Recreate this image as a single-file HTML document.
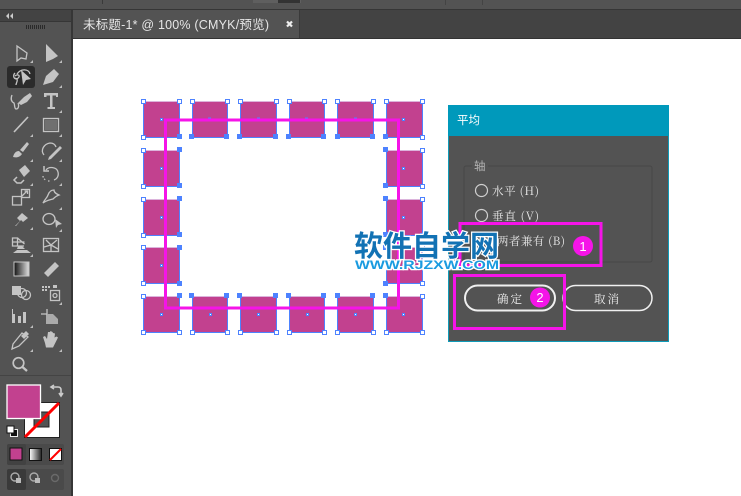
<!DOCTYPE html>
<html><head><meta charset="utf-8"><style>
html,body{margin:0;padding:0;width:741px;height:496px;overflow:hidden;background:#fff}
svg{display:block}
text{font-family:"Liberation Sans","Noto Sans CJK SC",sans-serif}
.s{font-family:"Noto Serif CJK SC",serif}
</style></head><body>
<svg width="741" height="496" viewBox="0 0 741 496" xmlns="http://www.w3.org/2000/svg">
<defs><linearGradient id="g"><stop offset="0" stop-color="#111"/><stop offset="1" stop-color="#e0e0e0"/></linearGradient><linearGradient id="g2"><stop offset="0" stop-color="#fff"/><stop offset="1" stop-color="#222"/></linearGradient></defs>
<rect width="741" height="496" fill="#fff"/>
<!-- top -->
<rect width="741" height="9" fill="#535353"/>
<rect y="9" width="741" height="1" fill="#363636"/>
<rect x="102" y="0" width="1" height="4" fill="#3a3a3a"/>
<rect x="253" y="0" width="48" height="3" fill="#5f5f5f"/>
<rect x="278" y="0" width="22" height="3" fill="#333"/>
<rect x="445" y="0" width="1" height="5" fill="#444"/>
<rect x="482" y="0" width="1" height="5" fill="#444"/>
<!-- tab bar -->
<rect x="73" y="10" width="668" height="29" fill="#434343"/>
<rect x="73" y="10" width="226" height="28" fill="#535353"/>
<rect x="299" y="10" width="1" height="28" fill="#3a3a3a"/>
<rect x="73" y="38" width="668" height="1" fill="#333"/>
<text x="83" y="29" font-size="12.500" fill="#e6e6e6" textLength="186" lengthAdjust="spacing">未标题-1* @ 100% (CMYK/预览)</text>
<path d="M287 21.500l5 5M292 21.500l-5 5" stroke="#eee" stroke-width="2.200"/>
<!-- left panel -->
<rect x="0" y="9" width="73" height="487" fill="#363636"/>
<rect x="0" y="10" width="71" height="11" fill="#434343"/>
<rect x="0" y="22" width="71" height="474" fill="#535353"/>
<path d="M9 13l-3 3 3 3zM13 13l-3 3 3 3z" fill="#ccc"/>
<path d="M26.500 25v4M28.500 25v4M30.500 25v4M32.500 25v4M34.500 25v4M36.500 25v4M38.500 25v4M40.500 25v4M42.500 25v4M44.500 25v4" stroke="#2a2a2a"/>
<rect x="7" y="66" width="28" height="22" rx="3" fill="#2b2b2b"/>
<!-- filled icons -->
<g fill="#c4c4c4">
<path d="M46 44l12 12-5 3-7 3z"/>
<path d="M21 70l10 9-5 1-3 5z"/>
<path d="M43 85l3-9 8-7 5 5-6 8z"/>
<path d="M18 103l6-6 6-4 2 3-5 6-6 3z"/>
<path d="M44 93h14v4h-2v-1.500h-3.500v11.500h2.500v2h-7.500v-2h2.500v-11.500h-3.500v1.500h-2.500z"/>
<rect x="45" y="120" width="12" height="10" fill="#707070"/>
<path d="M13 157c1-4 3-6 6-6l3 3c-2 3-5 4-9 3zM20 150l7-8 2 2-6 8z"/>
<path d="M49 157l11-11 2 2-11 11-3 1z"/>
<path d="M19 170l6-5 5 6-6 6z"/>
<path d="M15 226l5-5-3-3 5-5 6 5-5 4-2-2-5 6z"/>
<path d="M55 224l7 5-4 1-2 3z" transform="translate(0 -5)"/>
<path d="M13 253h18l-4-3H17zM17 249h8l-3-3h-4z"/>
<rect x="14" y="262" width="15" height="14" fill="url(#g)" stroke="#c4c4c4"/>
<path d="M44 273l11-11 4 4-11 11z"/>
<path d="M12 286h9v9h-9z"/>
<path d="M13 323v-9h2v9zM18 323v-7h3v7zM23 323v-11h3v11zM12 309h1v14h-1z"/>
<path d="M46 314h7l5 5v5H46z" fill="#aaa"/>
<path d="M45 343l-2-6 2-1 2 3 1-7 2 0 0.500-1 2 1 0.500 1 2 0.500-0.500 4 2-1 1.500 1-3 6-2 4h-7z"/>
<path d="M42 286h2v2h-2zM45 286h2v2h-2zM48 286h2v2h-2zM42 289h2v2h-2zM45 289h2v2h-2z"/>
<rect x="53" y="285" width="4" height="3"/>
<path d="M24 340l5-5-3-3-5 5z" transform="translate(0 -1)"/>
</g>
<!-- outlined icons -->
<g fill="none" stroke="#c4c4c4" stroke-width="1.300">
<path d="M17 46v15l4-3 5 1 1-6z"/>
<path d="M17 74c4-6 12-5 13 0M15 73c-2 2-2 6 2 6 1 2-1 4-1 6M15 76c2-2 5-1 4 1s-3 2-4 1"/>
<path d="M12 95c-2 5 0 7 2 8 1 2 0 5 2 6 3 0 3-4 2-6"/>
<path d="M14 132l14-15" stroke-width="1.600"/>
<rect x="43.500" y="118.500" width="15" height="13"/>
<path d="M44 155c-4-5 0-11 6-12 3 0 5 1 6 4"/>
<path d="M17 177l-3 3 3 3h4l3-3" stroke-width="1.500"/>
<path d="M46 170c3-4 11-3 12 2 1 4-1 7-4 8" stroke-width="1.300"/>
<path d="M43 176c0 2 2 4 3 4M48 181h3" stroke-dasharray="1.500 1.500"/>
<path d="M44 166v5h5" stroke-width="1.500"/>
<rect x="12.500" y="196.500" width="9" height="8.500"/><rect x="21.500" y="189.500" width="8" height="8"/>
<path d="M21 197l6-6M24.500 191h3v3"/>
<path d="M43 203c2-4 4-5 5-8 1-3 3-5 6-5 0 3 3 4 5 5-3 1-5 3-6 4-3 1-6 1-10 4z"/>
<ellipse cx="49" cy="219" rx="6" ry="5.500"/>
<path d="M12.500 238h5v8h-5zM17.500 238l7 6M12.500 242h12M17 246h7"/>
<rect x="43.500" y="238.500" width="15" height="13"/>
<path d="M46 240l5 5 6-5M51 245v6M44 247l7-2 7 4"/>
<circle cx="22" cy="293" r="4.500"/><circle cx="26" cy="295" r="4.500"/>
<rect x="50.500" y="290.500" width="9" height="10"/><circle cx="55" cy="295.500" r="2"/>
<path d="M41 314h6M47 309v5"/>
<path d="M12 349l1-5 9-11 6 4-9 9z"/>
<circle cx="18.500" cy="363" r="5.300" stroke-width="1.700"/><path d="M22.500 367l4.500 4" stroke-width="2.300"/>
</g>
<path d="M33 60v3h-3zM62 60v3h-3zM62 85v3h-3zM62 110v3h-3zM33 134v3h-3zM62 134v3h-3zM33 159v3h-3zM62 159v3h-3zM33 183v3h-3zM62 183v3h-3zM33 207v3h-3zM62 207v3h-3zM33 227v3h-3zM62 229v3h-3zM33 254v3h-3zM62 302v3h-3zM33 325v3h-3zM33 349v3h-3zM62 349v3h-3z" fill="#bdbdbd"/>
<rect x="0" y="375" width="71" height="1" fill="#444"/>
<!-- color -->
<rect x="24.500" y="402.500" width="35" height="35" fill="#fff" stroke="#222"/>
<rect x="34" y="412" width="15" height="15" fill="#535353" stroke="#222"/>
<path d="M25 437l34-34" stroke="#f00" stroke-width="3"/>
<rect x="7" y="385" width="33.500" height="33.500" fill="#c2418f" stroke="#fff" stroke-width="1.300"/>
<path d="M52 387h6c2 0 3 1 3 3v5M54 385l-3 2 3 2M59 393l2 3 2-3" fill="none" stroke="#ccc" stroke-width="1.600"/>
<rect x="10.500" y="429.500" width="7" height="7" fill="#111" stroke="#eee"/>
<rect x="7" y="426" width="7" height="7" fill="#fff" stroke="#111"/>
<!-- modes -->
<rect x="7" y="444" width="57" height="21" rx="2" fill="#4a4a4a"/>
<rect x="7" y="444" width="19" height="21" rx="2" fill="#424242"/>
<rect x="10" y="448" width="12" height="12" fill="#c2418f" stroke="#111"/>
<rect x="29.500" y="448.500" width="12" height="12" fill="url(#g2)" stroke="#111"/>
<rect x="49.500" y="448.500" width="12" height="12" fill="#fff" stroke="#111"/>
<path d="M50 460l11-11" stroke="#f00" stroke-width="2"/>
<rect x="7" y="469" width="57" height="21" rx="2" fill="#4a4a4a"/>
<rect x="7" y="469" width="19" height="21" rx="2" fill="#3a3a3a"/>
<g fill="none" stroke="#aaa" stroke-width="1.400"><circle cx="15" cy="477" r="4"/><circle cx="34" cy="477" r="4"/><circle cx="55" cy="478" r="3.500" stroke="#6a6a6a"/></g>
<path d="M16 478h5v5h-5zM35 478h5v5h-5z" fill="#bbb"/>
<!-- squares -->
<g fill="#c2418f" stroke="#4d82ff">
<rect x="143.500" y="101.500" width="36" height="36"/><rect x="192.500" y="101.500" width="35" height="36"/><rect x="240.500" y="101.500" width="36" height="36"/><rect x="289.500" y="101.500" width="35" height="36"/><rect x="337.500" y="101.500" width="36" height="36"/><rect x="386.500" y="101.500" width="36" height="36"/>
<rect x="143.500" y="150.500" width="36" height="36"/><rect x="386.500" y="150.500" width="36" height="36"/>
<rect x="143.500" y="199.500" width="36" height="36"/><rect x="386.500" y="199.500" width="36" height="36"/>
<rect x="143.500" y="247.500" width="36" height="36"/><rect x="386.500" y="247.500" width="36" height="36"/>
<rect x="143.500" y="296.500" width="36" height="36"/><rect x="192.500" y="296.500" width="35" height="36"/><rect x="240.500" y="296.500" width="36" height="36"/><rect x="289.500" y="296.500" width="35" height="36"/><rect x="337.500" y="296.500" width="36" height="36"/><rect x="386.500" y="296.500" width="36" height="36"/>
</g>
<path d="M144 101.500h35M193 101.500h34M241 101.500h35M290 101.500h34M338 101.500h35M387 101.500h35M144 150.500h35M387 150.500h35M144 199.500h35M387 199.500h35M144 247.500h35M387 247.500h35M144 296.500h35M193 296.500h34M241 296.500h35M290 296.500h34M338 296.500h35M387 296.500h35" stroke="#dcb4dc" fill="none"/>
<g fill="#fff" stroke="#4d82ff">
<path d="M141.500 99.500h4v4h-4zM177.500 99.500h4v4h-4zM141.500 135.500h4v4h-4zM190.500 99.500h4v4h-4zM225.500 99.500h4v4h-4zM238.500 99.500h4v4h-4zM274.500 99.500h4v4h-4zM287.500 99.500h4v4h-4zM322.500 99.500h4v4h-4zM335.500 99.500h4v4h-4zM371.500 99.500h4v4h-4zM384.500 99.500h4v4h-4zM420.500 99.500h4v4h-4zM420.500 135.500h4v4h-4z"/>
<path d="M141.500 148.500h4v4h-4zM141.500 184.500h4v4h-4zM420.500 148.500h4v4h-4zM420.500 184.500h4v4h-4zM141.500 197.500h4v4h-4zM141.500 233.500h4v4h-4zM420.500 197.500h4v4h-4zM420.500 233.500h4v4h-4zM141.500 245.500h4v4h-4zM141.500 281.500h4v4h-4zM420.500 245.500h4v4h-4zM420.500 281.500h4v4h-4z"/>
<path d="M141.500 294.500h4v4h-4zM141.500 330.500h4v4h-4zM177.500 330.500h4v4h-4zM190.500 330.500h4v4h-4zM225.500 330.500h4v4h-4zM238.500 330.500h4v4h-4zM274.500 330.500h4v4h-4zM287.500 330.500h4v4h-4zM322.500 330.500h4v4h-4zM335.500 330.500h4v4h-4zM371.500 330.500h4v4h-4zM384.500 330.500h4v4h-4zM420.500 294.500h4v4h-4zM420.500 330.500h4v4h-4z"/>
</g>
<g fill="#4d82ff">
<path d="M177 134h5v5h-5zM189 134h5v5h-5zM224 134h5v5h-5zM237 134h5v5h-5zM273 134h5v5h-5zM286 134h5v5h-5zM321 134h5v5h-5zM335 134h5v5h-5zM370 134h5v5h-5zM383 134h5v5h-5z"/>
<path d="M177 147h5v5h-5zM177 183h5v5h-5zM383 147h5v5h-5zM383 183h5v5h-5zM177 196h5v5h-5zM177 232h5v5h-5zM383 196h5v5h-5zM383 232h5v5h-5zM177 245h5v5h-5zM177 281h5v5h-5zM383 245h5v5h-5zM383 281h5v5h-5z"/>
<path d="M177 293h5v5h-5zM189 293h5v5h-5zM224 293h5v5h-5zM237 293h5v5h-5zM273 293h5v5h-5zM286 293h5v5h-5zM321 293h5v5h-5zM335 293h5v5h-5zM370 293h5v5h-5zM383 293h5v5h-5z"/>
</g>
<g fill="#fff" stroke="#4d82ff">
<path d="M160.500 118.500h2v2h-2zM402.500 118.500h2v2h-2zM160.500 167.500h2v2h-2zM402.500 167.500h2v2h-2zM160.500 216.500h2v2h-2zM402.500 216.500h2v2h-2zM160.500 264.500h2v2h-2zM402.500 264.500h2v2h-2zM160.500 313.500h2v2h-2zM209.500 313.500h2v2h-2zM257.500 313.500h2v2h-2zM306.500 313.500h2v2h-2zM354.500 313.500h2v2h-2zM402.500 313.500h2v2h-2z"/>
</g>
<path d="M208 118.500h3M257 118.500h3M305 118.500h3M354 118.500h3" stroke="#4d82ff" stroke-width="2"/>
<rect x="165.500" y="120" width="233" height="188" fill="none" stroke="#f514e8" stroke-width="3"/>
<!-- dialog -->
<rect x="448.500" y="105.500" width="220" height="236" fill="#535353" stroke="#0f9bb8"/>
<rect x="448" y="105" width="221" height="31" fill="#0099bb"/>
<text x="457" y="124" font-size="11.500" fill="#fff">平均</text>
<path d="M472 166h-6a2 2 0 0 0-2 2v92a2 2 0 0 0 2 2h184a2 2 0 0 0 2-2v-92a2 2 0 0 0-2-2h-162" fill="none" stroke="#474747"/>
<text x="474" y="170" font-size="11.500" fill="#b4b4b4">轴</text>
<circle cx="481.500" cy="190.500" r="6" fill="none" stroke="#d0d0d0" stroke-width="1.200"/>
<text x="492" y="195" font-size="11.500" fill="#e6e6e6" class="s" textLength="47">水平 (H)</text>
<circle cx="481.500" cy="215.500" r="6" fill="none" stroke="#d0d0d0" stroke-width="1.200"/>
<text x="492" y="220" font-size="11.500" fill="#e6e6e6" class="s" textLength="47">垂直 (V)</text>
<text x="497" y="245" font-size="11.500" fill="#e6e6e6" class="s" textLength="68">两者兼有 (B)</text>
<rect x="465" y="285.500" width="90" height="25" rx="12.500" fill="#535353" stroke="#f0f0f0" stroke-width="2"/>
<text x="497" y="303" font-size="11.500" fill="#f0f0f0" class="s" letter-spacing="2">确定</text>
<rect x="563" y="285.500" width="89" height="25" rx="12.500" fill="#535353" stroke="#f0f0f0" stroke-width="1.500"/>
<text x="594" y="303" font-size="11.500" fill="#f0f0f0" class="s" letter-spacing="2">取消</text>
<!-- callouts -->
<rect x="460" y="223.500" width="141" height="42" fill="none" stroke="#f514e8" stroke-width="3"/>
<rect x="454.500" y="275.500" width="110" height="53" fill="none" stroke="#f514e8" stroke-width="3"/>
<circle cx="583" cy="246" r="10" fill="#f514e8"/>
<text x="583" y="251" font-size="13" fill="#fff" text-anchor="middle">1</text>
<circle cx="540" cy="297.500" r="10" fill="#f514e8"/>
<text x="540" y="302" font-size="13" fill="#fff" text-anchor="middle">2</text>
<!-- watermark -->
<text x="354" y="256" font-size="29" font-weight="700" fill="#1272b4" stroke="#fff" stroke-width="2.500" paint-order="stroke" textLength="145" class="w" style="font-family:'Noto Sans CJK SC',sans-serif">软件自学网</text>
<text x="355" y="269" font-size="11.500" font-weight="700" fill="#1a9be0" stroke="#fff" stroke-width="2.500" paint-order="stroke" textLength="144" lengthAdjust="spacingAndGlyphs">WWW.RJZXW.COM</text>
</svg>
</body></html>
